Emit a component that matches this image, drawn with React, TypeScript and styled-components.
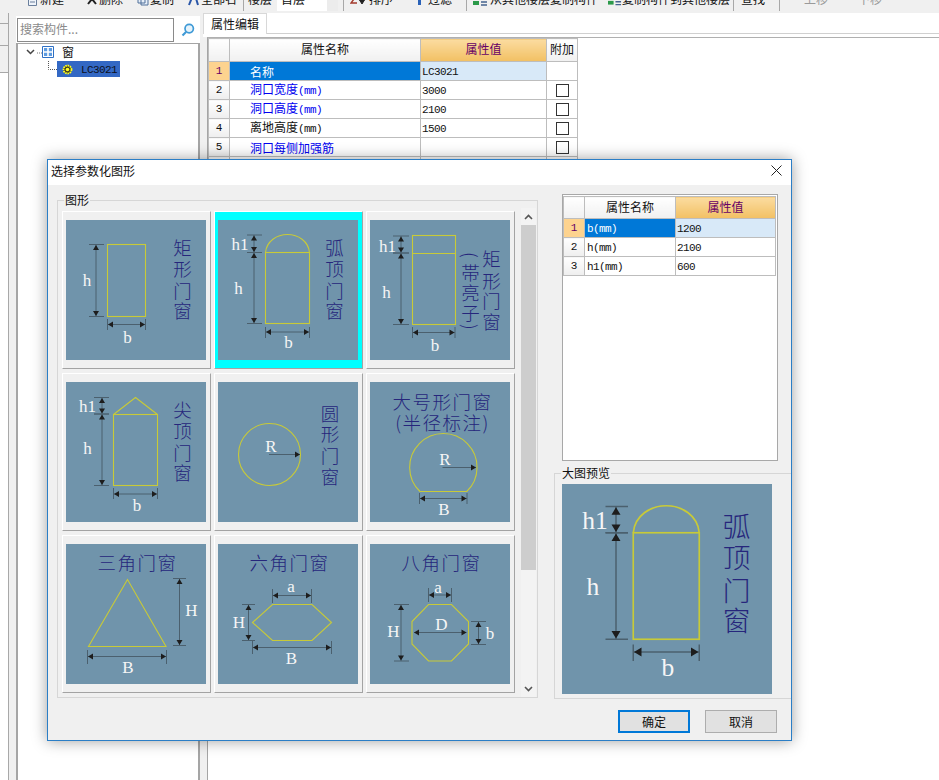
import React from "react";
import styled, { createGlobalStyle } from "styled-components";

const UI = `"Noto Sans CJK SC", "Liberation Sans", sans-serif`;

const Global = createGlobalStyle`
  html, body { margin: 0; padding: 0; background: #fff; overflow: hidden; }
  body { font-family: ${UI}; font-size: 12px; color: #111; }
  * { box-sizing: border-box; }
`;

const Page = styled.div`
  position: relative;
  width: 939px;
  height: 780px;
  overflow: hidden;
  display: flex;
  flex-direction: column;
  background: #fff;
`;

/* ---------- toolbar ---------- */
const Toolbar = styled.div`
  height: 13px;
  flex: none;
  background: #f0f0f0;
  overflow: hidden;
  padding-left: 27px;
`;
const ToolRow = styled.div`
  display: flex;
  height: 16px;
  margin-top: -9px;
  align-items: center;
  line-height: 16px;
  white-space: nowrap;
`;
const ToolItem = styled.div<{ $w: number; $dim?: boolean }>`
  width: ${(p) => p.$w}px;
  flex: none;
  display: flex;
  align-items: center;
  color: ${(p) => (p.$dim ? "#9a9a9a" : "#111")};
`;
const ToolIcon = styled.span<{ $w: number }>`
  width: ${(p) => p.$w}px;
  flex: none;
  display: flex;
  align-items: center;
`;
const ToolSep = styled.div<{ $w: number }>`
  width: ${(p) => p.$w}px;
  flex: none;
  height: 24px;
  border-left: 1px solid #a8a8a8;
`;
const FloorSelect = styled.div`
  width: 61px;
  flex: none;
  height: 24px;
  line-height: 16px;
  padding: 4px 0 0 4px;
  background: linear-gradient(to right, #fff 50px, #ececec 50px);
  margin-right: 5px;
`;

/* ---------- main area ---------- */
const Main = styled.div`
  flex: 1;
  display: flex;
  min-height: 0;
  background: #f0f0f0;
`;
const Rail = styled.div`
  width: 9px;
  flex: none;
  display: flex;
  flex-direction: column;
  border-right: 1px solid #a8a8a8;
`;
const RailTab = styled.div<{ $h: number }>`
  height: ${(p) => p.$h}px;
  flex: none;
  background: #f0f0f0;
  border-bottom: 1px solid #a8a8a8;
`;
const RailRest = styled.div`
  flex: 1;
  background: #fff;
`;
const LeftPanel = styled.div`
  width: 184px;
  flex: none;
  margin-left: 7px;
  padding-top: 3px;
  display: flex;
  flex-direction: column;
`;
const SearchRow = styled.div`
  height: 27px;
  flex: none;
  background: #fff;
  display: flex;
  align-items: flex-start;
  padding: 2px 0 0 1px;
`;
const SearchInput = styled.div`
  width: 157px;
  height: 24px;
  border: 1px solid #8a8a8a;
  color: #8a8a8a;
  padding-left: 2px;
  line-height: 20px;
  background: #fff;
`;
const SearchButton = styled.div`
  width: 24px;
  height: 24px;
  margin-left: 2px;
  display: flex;
  align-items: center;
  justify-content: center;
`;
const TreeBox = styled.div`
  flex: 1;
  background: #fff;
  border: 2px solid #a5a5a5;
  border-top-width: 1px;
  border-bottom: 0;
`;
const TreeRow = styled.div<{ $indent: number }>`
  height: 16px;
  margin-bottom: 1px;
  display: flex;
  align-items: center;
  padding-left: ${(p) => p.$indent}px;
`;
const TreeLabel = styled.span`
  margin-left: 8px;
  line-height: 16px;
`;
const TreeSelected = styled.div`
  width: 63px;
  height: 16px;
  background: #3368c4;
  display: flex;
  align-items: center;
  padding-left: 5px;
  color: #0d1020;
`;
const RightPanel = styled.div`
  flex: 1;
  margin-left: 3px;
  display: flex;
  flex-direction: column;
  min-width: 0;
`;
const TabStrip = styled.div`
  height: 21px;
  flex: none;
  background: #fff;
  border-bottom: 1px solid #d0d0d0;
  display: flex;
`;
const Tab = styled.div`
  width: 64px;
  height: 21px;
  background: #fff;
  border: 1px solid #d8d8d8;
  border-bottom: 0;
  padding-left: 7px;
  line-height: 19px;
`;
const TabGap = styled.div`
  height: 3px;
  flex: none;
  background: #fff;
`;
const GridArea = styled.div`
  flex: 1;
  margin-left: 4px;
  background: #fff;
  border-left: 1px solid #a5a5a5;
  border-top: 1px solid #b0b0b0;
`;

/* ---------- property grid ---------- */
const Table = styled.table<{ $w: number }>`
  border-collapse: collapse;
  table-layout: fixed;
  width: ${(p) => p.$w}px;
  td {
    line-height: 13px;
    vertical-align: middle;
  }
`;
const HeadCell = styled.th<{ $hot?: boolean; $h: number }>`
  height: ${(p) => p.$h}px;
  padding: 0 0 2px;
  font-weight: 400;
  font-size: 12px;
  line-height: 16px;
  text-align: center;
  border: 1px solid #bdbdbd;
  background: ${(p) =>
    p.$hot
      ? "linear-gradient(to bottom, #fbdca0, #f2c063)"
      : "linear-gradient(to bottom, #ffffff, #f0f0f0)"};
  color: ${(p) => (p.$hot ? "#660066" : "#111")};
`;
const NumCell = styled.td<{ $sel?: boolean }>`
  height: 19px;
  padding: 0;
  text-align: center;
  font-family: "Liberation Mono", monospace;
  font-size: 11px;
  border: 1px solid #bdbdbd;
  background: ${(p) => (p.$sel ? "#fdd38f" : "linear-gradient(to bottom, #fff, #eeeeee)")};
  color: ${(p) => (p.$sel ? "#660066" : "#111")};
`;
const NameCell = styled.td<{ $sel?: boolean; $blue?: boolean; $pad: number }>`
  height: 19px;
  padding: 0 0 0 ${(p) => p.$pad}px;
  white-space: nowrap;
  overflow: hidden;
  border: 1px solid #bdbdbd;
  background: ${(p) => (p.$sel ? "#0078d7" : "#fff")};
  color: ${(p) => (p.$sel ? "#fff" : p.$blue ? "#0000f0" : "#111")};
`;
const ValueCell = styled.td<{ $sel?: boolean }>`
  height: 19px;
  padding: 0 0 0 1px;
  border: 1px solid #bdbdbd;
  background: ${(p) => (p.$sel ? "#d8e9f8" : "#fff")};
`;
const CheckCell = styled.td`
  height: 19px;
  padding: 0;
  border: 1px solid #bdbdbd;
  background: #fff;
  text-align: center;
`;
const CheckBox = styled.span`
  display: block;
  width: 13px;
  height: 13px;
  margin: 0 auto;
  border: 1px solid #333;
  background: #fff;
`;
const Mono = styled.span`
  font-family: "Liberation Mono", monospace;
  font-size: 11px;
  letter-spacing: -0.6px;
`;

/* ---------- dialog ---------- */
const Dialog = styled.div`
  position: absolute;
  left: 47px;
  top: 159px;
  width: 745px;
  height: 582px;
  background: #f0f0f0;
  border: 1px solid #2b7ec6;
  box-shadow: 0 0 14px rgba(0, 0, 0, 0.38);
  display: flex;
  flex-direction: column;
`;
const TitleBar = styled.div`
  height: 25px;
  flex: none;
  background: #fff;
  display: flex;
  align-items: center;
  justify-content: space-between;
  padding: 0 9px 4px 3px;
`;
const Body = styled.div`
  flex: none;
  display: flex;
  padding: 9px 0 0 9px;
`;
const Group = styled.div`
  position: relative;
  margin-top: 6px;
  width: 481px;
  height: 498px;
  border: 1px solid #d6d6d6;
  display: flex;
`;
const Legend = styled.span`
  position: absolute;
  top: -8px;
  left: 6px;
  padding: 0 1px;
  line-height: 14px;
  background: #f0f0f0;
`;
const CardView = styled.div`
  width: 462px;
  height: 496px;
  overflow: hidden;
  padding: 10px 0 0 4px;
`;
const CardGrid = styled.div`
  display: grid;
  grid-template-columns: repeat(3, 149px);
  grid-auto-rows: 158px;
  gap: 4px 3px;
`;
const Card = styled.div<{ $sel?: boolean }>`
  width: 149px;
  height: 158px;
  padding: 8px 0 0 3px;
  border: 1px solid;
  border-color: #fff #a3a3a3 #a3a3a3 #fff;
  background: ${(p) => (p.$sel ? "#00ffff" : "#f0f0f0")};
`;
const ScrollBar = styled.div`
  width: 15px;
  height: 489px;
  margin: 7px 0 0 1px;
  background: #f3f3f3;
  display: flex;
  flex-direction: column;
`;
const ScrollArrow = styled.div<{ $h: number }>`
  height: ${(p) => p.$h}px;
  flex: none;
  display: flex;
  align-items: center;
  justify-content: center;
`;
const ScrollThumb = styled.div`
  height: 345px;
  flex: none;
  background: #cdcdcd;
`;
const ScrollTrack = styled.div`
  flex: 1;
`;
const RightCol = styled.div`
  margin-left: 16px;
  width: 237px;
  display: flex;
  flex-direction: column;
`;
const GridBox = styled.div`
  margin-left: 8px;
  width: 216px;
  height: 267px;
  background: #fff;
  border: 1px solid #a8a8a8;
  padding: 1px 0 0 0;
`;
const PreviewGroup = styled.div`
  position: relative;
  margin-top: 12px;
  height: 226px;
  border: 1px solid #d6d6d6;
  border-right: 0;
  padding: 10px 0 0 7px;
`;
const Footer = styled.div`
  display: flex;
  justify-content: flex-end;
  gap: 15px;
  padding: 11px 14px 0 0;
`;
const Btn = styled.div<{ $primary?: boolean }>`
  width: 72px;
  height: 23px;
  background: #e1e1e1;
  border: ${(p) => (p.$primary ? "2px solid #0078d7" : "1px solid #adadad")};
  display: flex;
  align-items: center;
  justify-content: center;
  color: #111;
`;

/* ---------- diagrams ---------- */
const Dgm = styled.svg<{ $size: number }>`
  display: block;
  width: ${(p) => p.$size}px;
  height: ${(p) => p.$size}px;
  background: #7094ab;
`;
const Latin = styled.text`
  font-family: "Liberation Serif", serif;
  font-size: 17px;
  fill: #f6f6f6;
  text-anchor: middle;
  dominant-baseline: central;
`;
const Han = styled.text`
  font-family: "Noto Sans CJK SC", sans-serif;
  font-size: 18.5px;
  font-weight: 300;
  fill: #26267c;
  text-anchor: middle;
  dominant-baseline: central;
`;
const Outline = styled.g`
  fill: none;
  stroke: #c8ca38;
  stroke-width: 1.1;
`;

const ink = "#4b606e";
const dark = "#1d1d1d";

function HDim({ x1, x2, y, t1, t2 }: { x1: number; x2: number; y: number; t1: number; t2: number }) {
  return (
    <g>
      <path d={`M${x1} ${t1}V${t2}M${x2} ${t1}V${t2}`} stroke={ink} fill="none" />
      <path d={`M${x1} ${y}H${x2}`} stroke={ink} fill="none" />
      <path d={`M${x1 + 0.5} ${y}l5 -3v6zM${x2 - 0.5} ${y}l-5 -3v6z`} fill={dark} />
    </g>
  );
}
function VDim({ y1, y2, x, t1, t2 }: { y1: number; y2: number; x: number; t1: number; t2: number }) {
  return (
    <g>
      <path d={`M${t1} ${y1}H${t2}M${t1} ${y2}H${t2}`} stroke={ink} fill="none" />
      <path d={`M${x} ${y1}V${y2}`} stroke={ink} fill="none" />
      <path d={`M${x} ${y1 + 0.5}l-3 5h6zM${x} ${y2 - 0.5}l-3 -5h6z`} fill={dark} />
    </g>
  );
}
function Arrow({ x1, x2, y }: { x1: number; x2: number; y: number }) {
  return (
    <g>
      <path d={`M${x1} ${y}H${x2}`} stroke={ink} fill="none" />
      <path d={`M${x2} ${y}l-5 -3v6z`} fill={dark} />
    </g>
  );
}
function Column({ text, x, ys }: { text: string; x: number; ys: number[] }) {
  return (
    <Han>
      {Array.from(text).map((c, i) => (
        <tspan key={i} x={x} y={ys[i]}>
          {c}
        </tspan>
      ))}
    </Han>
  );
}
function Line({ text, x, y, gap = 1 }: { text: string; x: number; y: number; gap?: number }) {
  return (
    <Han x={x} y={y} letterSpacing={gap}>
      {text}
    </Han>
  );
}

const ArcTop = () => (
  <>
    <Outline>
      <rect x="47.5" y="32.5" width="44" height="71" />
      <path d="M47.5 32.5C48.5 21 59 14.5 69.5 14.5S90.5 21 91.5 32.5" />
    </Outline>
    <VDim y1={15} y2={32.5} x={36} t1={29} t2={44} />
    <VDim y1={32.5} y2={103.5} x={36} t1={29} t2={44} />
    <HDim x1={47.5} x2={91.5} y={112} t1={107} t2={118} />
    <Latin x={22} y={24}>h1</Latin>
    <Latin x={20.5} y={68}>h</Latin>
    <Latin x={70.5} y={122}>b</Latin>
    <Column text="弧顶门窗" x={116.5} ys={[27, 48, 70, 90]} />
  </>
);

const shapes: React.ReactNode[] = [
  <>
    <Outline>
      <rect x="41.5" y="24.5" width="38" height="72" />
    </Outline>
    <VDim y1={24.5} y2={96.5} x={30} t1={23} t2={38} />
    <HDim x1={41.5} x2={79.5} y={104.5} t1={99} t2={110} />
    <Latin x={21} y={60}>h</Latin>
    <Latin x={61.5} y={117}>b</Latin>
    <Column text="矩形门窗" x={116.5} ys={[27, 48, 70, 90]} />
  </>,
  <ArcTop />,
  <>
    <Outline>
      <rect x="42.5" y="15.5" width="43" height="89" />
      <path d="M42.5 33.5H85.5" />
    </Outline>
    <VDim y1={16} y2={33} x={31} t1={23} t2={39} />
    <VDim y1={33} y2={104.5} x={31} t1={23} t2={39} />
    <HDim x1={42.5} x2={85} y={112.5} t1={107} t2={118} />
    <Latin x={17.5} y={26}>h1</Latin>
    <Latin x={16.5} y={72}>h</Latin>
    <Latin x={65} y={125}>b</Latin>
    <Column text="矩形门窗" x={121.5} ys={[38, 60, 80, 101]} />
    <Column text="帯亮子" x={100.5} ys={[52, 72, 92]} />
    <Han x={100.5} y={35} transform="rotate(90 100.5 35)">(</Han>
    <Han x={100.5} y={107} transform="rotate(90 100.5 107)">)</Han>
  </>,
  <>
    <Outline>
      <rect x="47.5" y="32.5" width="44" height="71" />
      <path d="M47.5 32.5L69.5 15.5L91.5 32.5" />
    </Outline>
    <VDim y1={15.5} y2={32} x={36} t1={28} t2={43} />
    <VDim y1={32} y2={103.5} x={36} t1={28} t2={43} />
    <HDim x1={47.5} x2={91.5} y={112} t1={106} t2={117} />
    <Latin x={21.5} y={24}>h1</Latin>
    <Latin x={21.5} y={66}>h</Latin>
    <Latin x={71} y={123}>b</Latin>
    <Column text="尖顶门窗" x={116.5} ys={[27, 48, 70, 90]} />
  </>,
  <>
    <Outline>
      <circle cx="51.5" cy="72.5" r="31" />
    </Outline>
    <Arrow x1={51} x2={82} y={72.5} />
    <Latin x={53} y={64}>R</Latin>
    <Column text="圆形门窗" x={112} ys={[31, 51, 73, 94]} />
  </>,
  <>
    <Outline>
      <path d="M50 109.5A33.7 33.7 0 1 1 96.7 109.5Z" />
    </Outline>
    <Arrow x1={72.5} x2={106} y={85.5} />
    <HDim x1={49.5} x2={97} y={116.5} t1={111} t2={122} />
    <Latin x={75} y={77}>R</Latin>
    <Latin x={74} y={127.5}>B</Latin>
    <Line text="大号形门窗" x={72.5} y={19} gap={1.5} />
    <Line text="(半径标注)" x={72.5} y={40} gap={1.5} />
  </>,
  <>
    <Outline>
      <path d="M61.5 35.5L22.5 102.5H100Z" />
    </Outline>
    <VDim y1={34.5} y2={101.5} x={113.5} t1={107} t2={120} />
    <HDim x1={21.5} x2={100.5} y={112.5} t1={106} t2={120} />
    <Latin x={125.5} y={66}>H</Latin>
    <Latin x={62} y={123}>B</Latin>
    <Line text="三角门窗" x={71.5} y={18} gap={1.5} />
  </>,
  <>
    <Outline>
      <path d="M34.5 78.5L54.5 60.5H94L113.5 78.5L94 96.5H54.5Z" />
    </Outline>
    <HDim x1={54.5} x2={93.5} y={51.5} t1={45} t2={59} />
    <VDim y1={60.5} y2={96.5} x={30.5} t1={24} t2={37} />
    <HDim x1={34.5} x2={113.5} y={103.5} t1={97} t2={110} />
    <Latin x={73} y={42}>a</Latin>
    <Latin x={21} y={78}>H</Latin>
    <Latin x={73.5} y={114}>B</Latin>
    <Line text="六角门窗" x={71.5} y={18} gap={1.5} />
  </>,
  <>
    <Outline>
      <path d="M58.5 60.5H81.5L98.5 77.5V100L81.5 117H58.5L42 100V77.5Z" />
    </Outline>
    <HDim x1={58.5} x2={81.5} y={51} t1={44} t2={58} />
    <VDim y1={60.5} y2={117} x={31} t1={24} t2={39} />
    <VDim y1={77.5} y2={100.5} x={108.5} t1={101} t2={116} />
    <path d={`M44 88.5H96.5`} stroke={ink} fill="none" />
    <path d="M44 88.5l5 -3v6zM96.5 88.5l-5 -3v6z" fill={dark} />
    <Latin x={68} y={43}>a</Latin>
    <Latin x={23.5} y={87}>H</Latin>
    <Latin x={71.5} y={80}>D</Latin>
    <Latin x={120} y={89}>b</Latin>
    <Line text="八角门窗" x={71.5} y={18} gap={1.5} />
  </>,
];

function Diagram({ size, children }: { size: number; children: React.ReactNode }) {
  return (
    <Dgm $size={size} viewBox="0 0 140 140">
      {children}
    </Dgm>
  );
}

/* ---------- small icons ---------- */
const DocIcon = () => (
  <svg width="11" height="14" viewBox="0 0 11 14">
    <path d="M1.5 .5h8v13h-8z" fill="#eef3fa" stroke="#6a7f9c" />
    <path d="M3 4h5M3 7h5M3 10h5" stroke="#6a7f9c" />
  </svg>
);
const DelIcon = () => (
  <svg width="12" height="14" viewBox="0 0 12 14">
    <path d="M2 2l8 10M10 2L2 12" stroke="#222" strokeWidth="2" />
  </svg>
);
const CopyIcon = () => (
  <svg width="13" height="14" viewBox="0 0 13 14">
    <path d="M1 2h7v9H1zM4 4h7v9H4z" fill="#e6eef8" stroke="#51709a" />
  </svg>
);
const RenameIcon = () => (
  <svg width="13" height="14" viewBox="0 0 13 14">
    <path d="M2 13L6 3h2l3 10" fill="none" stroke="#2a56a8" strokeWidth="2" />
  </svg>
);
const SortIcon = () => (
  <svg width="17" height="14" viewBox="0 0 17 14">
    <path d="M7 3H1l3 4-3 4h6" fill="none" stroke="#a33a2c" strokeWidth="1.4" />
    <path d="M12 2v8M9.5 8l2.5 4 2.5-4z" stroke="#222" fill="#222" />
  </svg>
);
const FilterIcon = () => (
  <svg width="10" height="14" viewBox="0 0 10 14">
    <path d="M3 4h3v9H3z" fill="#2a62b8" />
  </svg>
);
const LayerIcon = () => (
  <svg width="15" height="14" viewBox="0 0 15 14">
    <path d="M0 9h6v4H0z" fill="#2c9a4a" />
    <path d="M8 2h6M8 6h6M8 10h6M8 13h6" stroke="#44638f" strokeWidth="1.5" />
  </svg>
);
const MoveIcon = () => (
  <svg width="10" height="14" viewBox="0 0 10 14">
    <path d="M2 4h5v4H2z" fill="#c4c4c4" />
  </svg>
);
const SearchGlass = () => (
  <svg width="14" height="14" viewBox="0 0 14 14">
    <circle cx="8.2" cy="5.6" r="4.2" fill="#e6f3fb" stroke="#3f9ad6" strokeWidth="1.7" />
    <path d="M5 9L1.5 12.5" stroke="#3f9ad6" strokeWidth="2.2" />
  </svg>
);
const Chevron = () => (
  <svg width="16" height="14" viewBox="0 0 16 14">
    <path d="M1 5l3.5 3.5L8 5" fill="none" stroke="#444" strokeWidth="1.5" />
    <path d="M11 8h5" stroke="#777" strokeDasharray="1 1" />
  </svg>
);
const WindowGlyph = () => (
  <svg width="12" height="12" viewBox="0 0 12 12">
    <path d="M.5 .5h11v11H.5z" fill="#fff" stroke="#2f70c4" />
    <path d="M2 2h3.2v3.2H2zM6.8 2H10v3.2H6.8zM2 6.8h3.2V10H2zM6.8 6.8H10V10H6.8z" fill="#5d9be0" />
  </svg>
);
const Connector = () => (
  <svg width="10" height="16" viewBox="0 0 10 16">
    <path d="M1.5 0V8.5H10" fill="none" stroke="#555" strokeDasharray="1 1" />
  </svg>
);
const GearGlyph = () => (
  <svg width="11" height="11" viewBox="0 0 11 11">
    <circle cx="5.5" cy="5.5" r="4" fill="#3d3d1c" stroke="#ffff20" strokeWidth="1.8" strokeDasharray="1.6 .7" />
    <circle cx="5.5" cy="5.5" r="1.8" fill="#ffff20" />
  </svg>
);
const CloseGlyph = () => (
  <svg width="11" height="11" viewBox="0 0 11 11">
    <path d="M.5 .5l10 10M10.5 .5l-10 10" stroke="#222" strokeWidth="1" />
  </svg>
);
const ScrollChevron = ({ down }: { down?: boolean }) => (
  <svg width="9" height="6" viewBox="0 0 9 6">
    <path d={down ? "M1 1l3.5 3.5L8 1" : "M1 5l3.5-3.5L8 5"} fill="none" stroke="#555" strokeWidth="1.6" />
  </svg>
);

/* ---------- data ---------- */
const outerRows: { name: React.ReactNode; blue: boolean; value: string; check: boolean }[] = [
  { name: "名称", blue: false, value: "LC3021", check: false },
  { name: <>洞口宽度<Mono>(mm)</Mono></>, blue: true, value: "3000", check: true },
  { name: <>洞口高度<Mono>(mm)</Mono></>, blue: true, value: "2100", check: true },
  { name: <>离地高度<Mono>(mm)</Mono></>, blue: false, value: "1500", check: true },
  { name: "洞口每侧加强筋", blue: true, value: "", check: true },
  { name: "", blue: false, value: "", check: false },
];
const innerRows = [
  { name: "b(mm)", value: "1200" },
  { name: "h(mm)", value: "2100" },
  { name: "h1(mm)", value: "600" },
];

export default function App() {
  return (
    <Page>
      <Global />
      <Toolbar>
        <ToolRow>
          <ToolItem $w={59}><ToolIcon $w={13}><DocIcon /></ToolIcon>新建</ToolItem>
          <ToolItem $w={51}><ToolIcon $w={13}><DelIcon /></ToolIcon>删除</ToolItem>
          <ToolItem $w={50}><ToolIcon $w={13}><CopyIcon /></ToolIcon>复制</ToolItem>
          <ToolItem $w={56}><ToolIcon $w={14}><RenameIcon /></ToolIcon>全部名</ToolItem>
          <ToolSep $w={5} />
          <ToolItem $w={29}>楼层</ToolItem>
          <FloorSelect>首层</FloorSelect>
          <ToolSep $w={7} />
          <ToolItem $w={65}><ToolIcon $w={19}><SortIcon /></ToolIcon>排序</ToolItem>
          <ToolItem $w={51}><ToolIcon $w={13}><FilterIcon /></ToolIcon>过滤</ToolItem>
          <ToolSep $w={7} />
          <ToolItem $w={135}><ToolIcon $w={17}><LayerIcon /></ToolIcon>从其他楼层复制构件</ToolItem>
          <ToolItem $w={125}><ToolIcon $w={14}><LayerIcon /></ToolIcon>复制构件到其他楼层</ToolItem>
          <ToolSep $w={8} />
          <ToolItem $w={38}>查找</ToolItem>
          <ToolSep $w={11} />
          <ToolItem $w={55} $dim><ToolIcon $w={14}><MoveIcon /></ToolIcon>上移</ToolItem>
          <ToolItem $w={40} $dim><ToolIcon $w={13}><MoveIcon /></ToolIcon>下移</ToolItem>
        </ToolRow>
      </Toolbar>
      <Main>
        <Rail>
          <RailTab $h={11} />
          <RailTab $h={22} />
          <RailTab $h={27} />
          <RailRest />
        </Rail>
        <LeftPanel>
          <SearchRow>
            <SearchInput>搜索构件...</SearchInput>
            <SearchButton><SearchGlass /></SearchButton>
          </SearchRow>
          <TreeBox>
            <TreeRow $indent={8}>
              <Chevron />
              <WindowGlyph />
              <TreeLabel>窗</TreeLabel>
            </TreeRow>
            <TreeRow $indent={29}>
              <Connector />
              <TreeSelected>
                <GearGlyph />
                <TreeLabel><Mono>LC3021</Mono></TreeLabel>
              </TreeSelected>
            </TreeRow>
          </TreeBox>
        </LeftPanel>
        <RightPanel>
          <TabStrip><Tab>属性编辑</Tab></TabStrip>
          <TabGap />
          <GridArea>
            <Table $w={370}>
              <colgroup>
                <col width={21} />
                <col width={191} />
                <col width={126} />
                <col width={31} />
              </colgroup>
              <thead>
                <tr>
                  <HeadCell $h={23} />
                  <HeadCell $h={23}>属性名称</HeadCell>
                  <HeadCell $h={23} $hot>属性值</HeadCell>
                  <HeadCell $h={23}>附加</HeadCell>
                </tr>
              </thead>
              <tbody>
                {outerRows.map((r, i) => (
                  <tr key={i}>
                    <NumCell $sel={i === 0}>{i < 5 ? i + 1 : ""}</NumCell>
                    <NameCell $pad={20} $sel={i === 0} $blue={r.blue}>{r.name}</NameCell>
                    <ValueCell $sel={i === 0}><Mono>{r.value}</Mono></ValueCell>
                    <CheckCell>{r.check && <CheckBox />}</CheckCell>
                  </tr>
                ))}
              </tbody>
            </Table>
          </GridArea>
        </RightPanel>
      </Main>

      <Dialog>
        <TitleBar>
          选择参数化图形
          <CloseGlyph />
        </TitleBar>
        <Body>
          <Group>
            <Legend>图形</Legend>
            <CardView>
              <CardGrid>
                {shapes.map((s, i) => (
                  <Card key={i} $sel={i === 1}>
                    <Diagram size={140}>{s}</Diagram>
                  </Card>
                ))}
                <Card />
                <Card />
                <Card />
              </CardGrid>
            </CardView>
            <ScrollBar>
              <ScrollArrow $h={17}><ScrollChevron /></ScrollArrow>
              <ScrollThumb />
              <ScrollTrack />
              <ScrollArrow $h={17}><ScrollChevron down /></ScrollArrow>
            </ScrollBar>
          </Group>
          <RightCol>
            <GridBox>
              <Table $w={212}>
                <colgroup>
                  <col width={21} />
                  <col width={91} />
                  <col width={100} />
                </colgroup>
                <thead>
                  <tr>
                    <HeadCell $h={22} />
                    <HeadCell $h={22}>属性名称</HeadCell>
                    <HeadCell $h={22} $hot>属性值</HeadCell>
                  </tr>
                </thead>
                <tbody>
                  {innerRows.map((r, i) => (
                    <tr key={r.name}>
                      <NumCell $sel={i === 0}>{i + 1}</NumCell>
                      <NameCell $pad={2} $sel={i === 0}><Mono>{r.name}</Mono></NameCell>
                      <ValueCell $sel={i === 0}><Mono>{r.value}</Mono></ValueCell>
                    </tr>
                  ))}
                </tbody>
              </Table>
            </GridBox>
            <PreviewGroup>
              <Legend>大图预览</Legend>
              <Diagram size={210}><ArcTop /></Diagram>
            </PreviewGroup>
          </RightCol>
        </Body>
        <Footer>
          <Btn $primary>确定</Btn>
          <Btn>取消</Btn>
        </Footer>
      </Dialog>
    </Page>
  );
}
